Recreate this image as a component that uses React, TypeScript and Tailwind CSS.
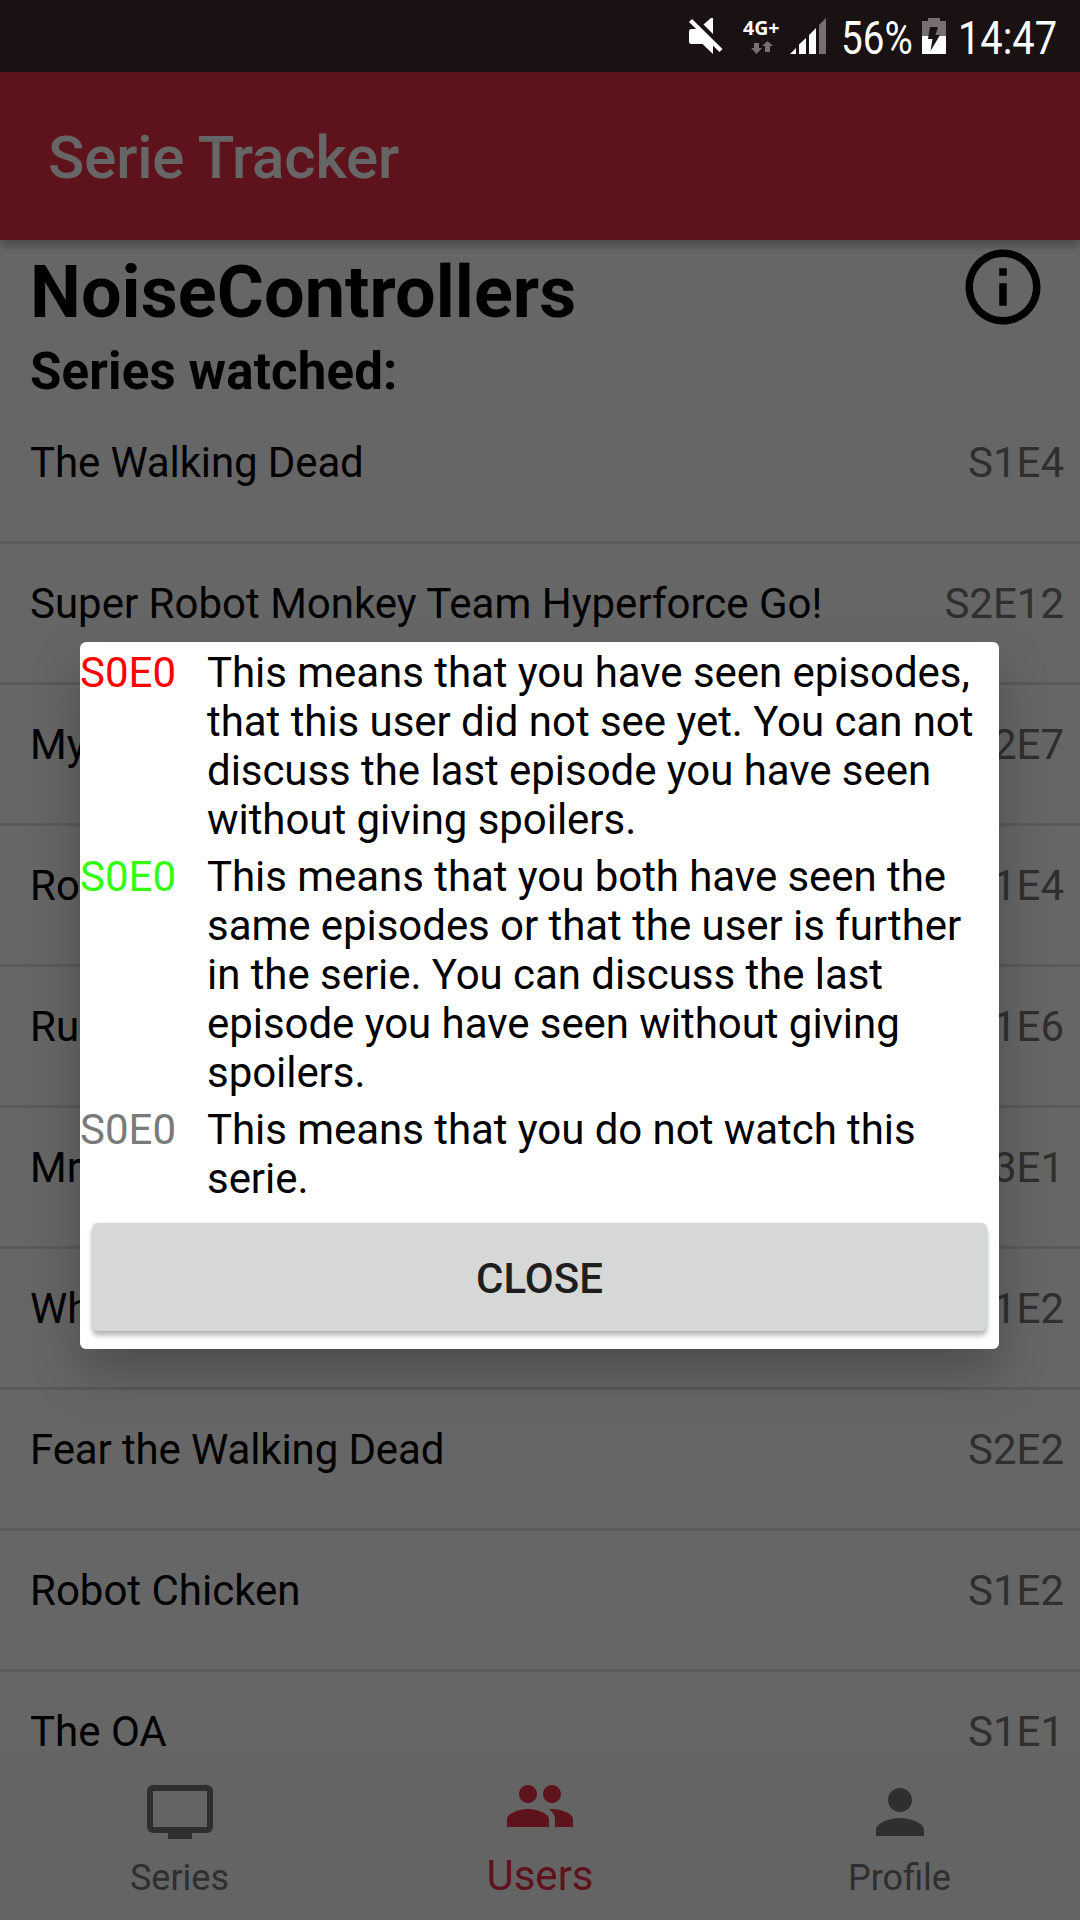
import { MdInfoOutline, MdPeople, MdPerson, MdPersonalVideo } from "react-icons/md";

const series = [
  { name: "The Walking Dead", episode: "S1E4", tight: true },
  { name: "Super Robot Monkey Team Hyperforce Go!", episode: "S2E12" },
  { name: "My", episode: "S2E7" },
  { name: "Ro", episode: "S1E4" },
  { name: "Ru", episode: "S1E6" },
  { name: "Mr", episode: "S3E1" },
  { name: "Wh", episode: "S1E2" },
  { name: "Fear the Walking Dead", episode: "S2E2", tight: true },
  { name: "Robot Chicken", episode: "S1E2" },
  { name: "The OA", episode: "S1E1" },
];

const legend = [
  {
    color: "text-[#ff0000]",
    lines: [
      "This means that you have seen episodes,",
      "that this user did not see yet. You can not",
      "discuss the last episode you have seen",
      "without giving spoilers.",
    ],
  },
  {
    color: "text-[#33ff11]",
    lines: [
      "This means that you both have seen the",
      "same episodes or that the user is further",
      "in the serie. You can discuss the last",
      "episode you have seen without giving",
      "spoilers.",
    ],
  },
  {
    color: "text-[#7a7a7a]",
    lines: ["This means that you do not watch this", "serie."],
  },
];

function StatusBar() {
  return (
    <div className="flex h-[72px] shrink-0 bg-[#1a1112] pl-[689px] text-white">
      <svg className="mt-[18px] h-[36px] w-[34px] shrink-0" viewBox="0 0 34 36" fill="#fff">
        <path d="M0 13.500 Q0 11 2.500 11 H8.500 L24 26.500 V36 L13.500 26 H2.500 Q0 26 0 23.500Z" />
        <path d="M14.500 6.500 L22 0 H24 V16Z" />
        <path d="M3 1 L33.500 31 L30.500 34 L0 4Z" />
      </svg>
      <div className="ml-[20px] mt-[16px] w-[40px] shrink-0">
        <div className="h-[24px] text-[19.500px] font-bold leading-[24px] [font-family:'Open_Sans',sans-serif]">4G+</div>
        <svg className="ml-[8px] h-[14px] w-[22px]" viewBox="0 0 22 14" fill="#767071">
          <path d="M3 3H8V8H11L5.500 14L0 8H3Z" />
          <path d="M14 12V6H11L16.500 1L22 6H19V12Z" />
        </svg>
      </div>
      <svg className="ml-[7px] mt-[18px] h-[36px] w-[37px] shrink-0" viewBox="0 0 37 36">
        <path fill="#fff" d="M0 36L6 30V36ZM9 26.500L16 20V36H9ZM19 17L26 10V36H19Z" />
        <path fill="#767071" d="M29 7L36 0V36H29Z" />
      </svg>
      <div className="ml-[14px] mt-[11px] w-[80px] shrink-0">
        <span className="inline-block origin-left scale-x-[0.84] text-[46px] leading-[54px]">56%</span>
      </div>
      <svg className="ml-[1px] mt-[18px] h-[36px] w-[24px] shrink-0" viewBox="0 0 24 36">
        <path fill="#767071" d="M6 0H18V3H24V18H0V3H6Z" />
        <path fill="#fff" d="M0 18H24V36H0Z" />
        <path fill="#1a1112" d="M8 9H16L13.500 17H18L8.500 33L10.500 21H6Z" />
      </svg>
      <div className="ml-[12px] mt-[11px] w-[104px] shrink-0">
        <span className="inline-block origin-left scale-x-[0.865] text-[46px] leading-[54px]">14:47</span>
      </div>
    </div>
  );
}

function NavItem({ icon, label, active }: { icon: React.ReactNode; label: string; active?: boolean }) {
  return (
    <div
      className={
        active
          ? "flex flex-1 flex-col items-center pt-[18px] text-[#ec3046]"
          : "flex flex-1 flex-col items-center pt-[24px] text-[#757575]"
      }
    >
      {icon}
      <span
        className={
          active ? "mt-[9px] text-[42px] leading-[49px]" : "mr-[1px] mt-[9px] text-[36px] leading-[42px]"
        }
      >
        {label}
      </span>
    </div>
  );
}

function InfoDialog() {
  return (
    <div className="flex h-[707px] w-[919px] flex-col rounded-[6px] bg-white pt-[6px] text-black shadow-[0_24px_50px_rgba(0,0,0,0.25)]">
      {legend.map((item) => (
        <div key={item.color} className="mb-[8px] flex text-[42px] leading-[49px]">
          <span className={`w-[127px] shrink-0 ${item.color}`}>S0E0</span>
          <div className="tracking-[-0.05px]">
            {item.lines.map((line) => (
              <p key={line} className="whitespace-nowrap">
                {line}
              </p>
            ))}
          </div>
        </div>
      ))}
      <button className="mx-[12px] mb-[18px] mt-auto h-[108px] rounded-[6px] bg-[#d6d7d7] pt-[2px] text-[42px] font-medium text-[#1e1e1e] shadow-[0_5px_5px_rgba(0,0,0,0.26),0_0_3px_rgba(0,0,0,0.12)]">
        CLOSE
      </button>
    </div>
  );
}

export default function App() {
  return (
    <div className="flex h-[1920px] w-[1080px] flex-col overflow-hidden bg-white [font-family:Roboto,sans-serif]">
      <StatusBar />
      <div className="relative flex min-h-0 flex-1 flex-col">
        <header className="z-10 flex h-[168px] shrink-0 items-center bg-[#ec3046] pl-[48px] pt-[4px] text-[60px] font-medium tracking-[-0.15px] text-white shadow-[0_5px_10px_rgba(0,0,0,0.3)]">
          Serie Tracker
        </header>
        <main className="min-h-0 flex-1 overflow-hidden text-black">
          <div className="flex h-[105px] justify-between pl-[30px] pr-[32px]">
            <h1 className="pt-[11px] text-[72px] font-bold leading-[84px] tracking-[0.08px]">NoiseControllers</h1>
            <MdInfoOutline className="mt-[2px] size-[90px]" />
          </div>
          <h2 className="h-[58px] pl-[30px] text-[51px] font-bold leading-[54px] tracking-[0.15px]">
            Series watched:
          </h2>
          <ul>
            {series.map((item, index) => (
              <li
                key={index}
                className="flex h-[141px] justify-between border-b-[3px] border-[#e0e0e0] pl-[30px] pr-[16px] pt-[35px] text-[42px] leading-[49px]"
              >
                <span className={item.tight ? "tracking-[-0.12px]" : ""}>{item.name}</span>
                <span className="text-[#757575]">{item.episode}</span>
              </li>
            ))}
          </ul>
        </main>
        <nav className="z-10 flex h-[168px] shrink-0 bg-[#fafafa] shadow-[0_0_6px_rgba(0,0,0,0.04)]">
          <NavItem icon={<MdPersonalVideo className="size-[72px]" />} label="Series" />
          <NavItem icon={<MdPeople className="size-[72px]" />} label="Users" active />
          <NavItem icon={<MdPerson className="size-[72px]" />} label="Profile" />
        </nav>
        <div className="absolute inset-0 z-20 flex items-start justify-center bg-black/60 pr-[1px] pt-[570px]">
          <InfoDialog />
        </div>
      </div>
    </div>
  );
}
